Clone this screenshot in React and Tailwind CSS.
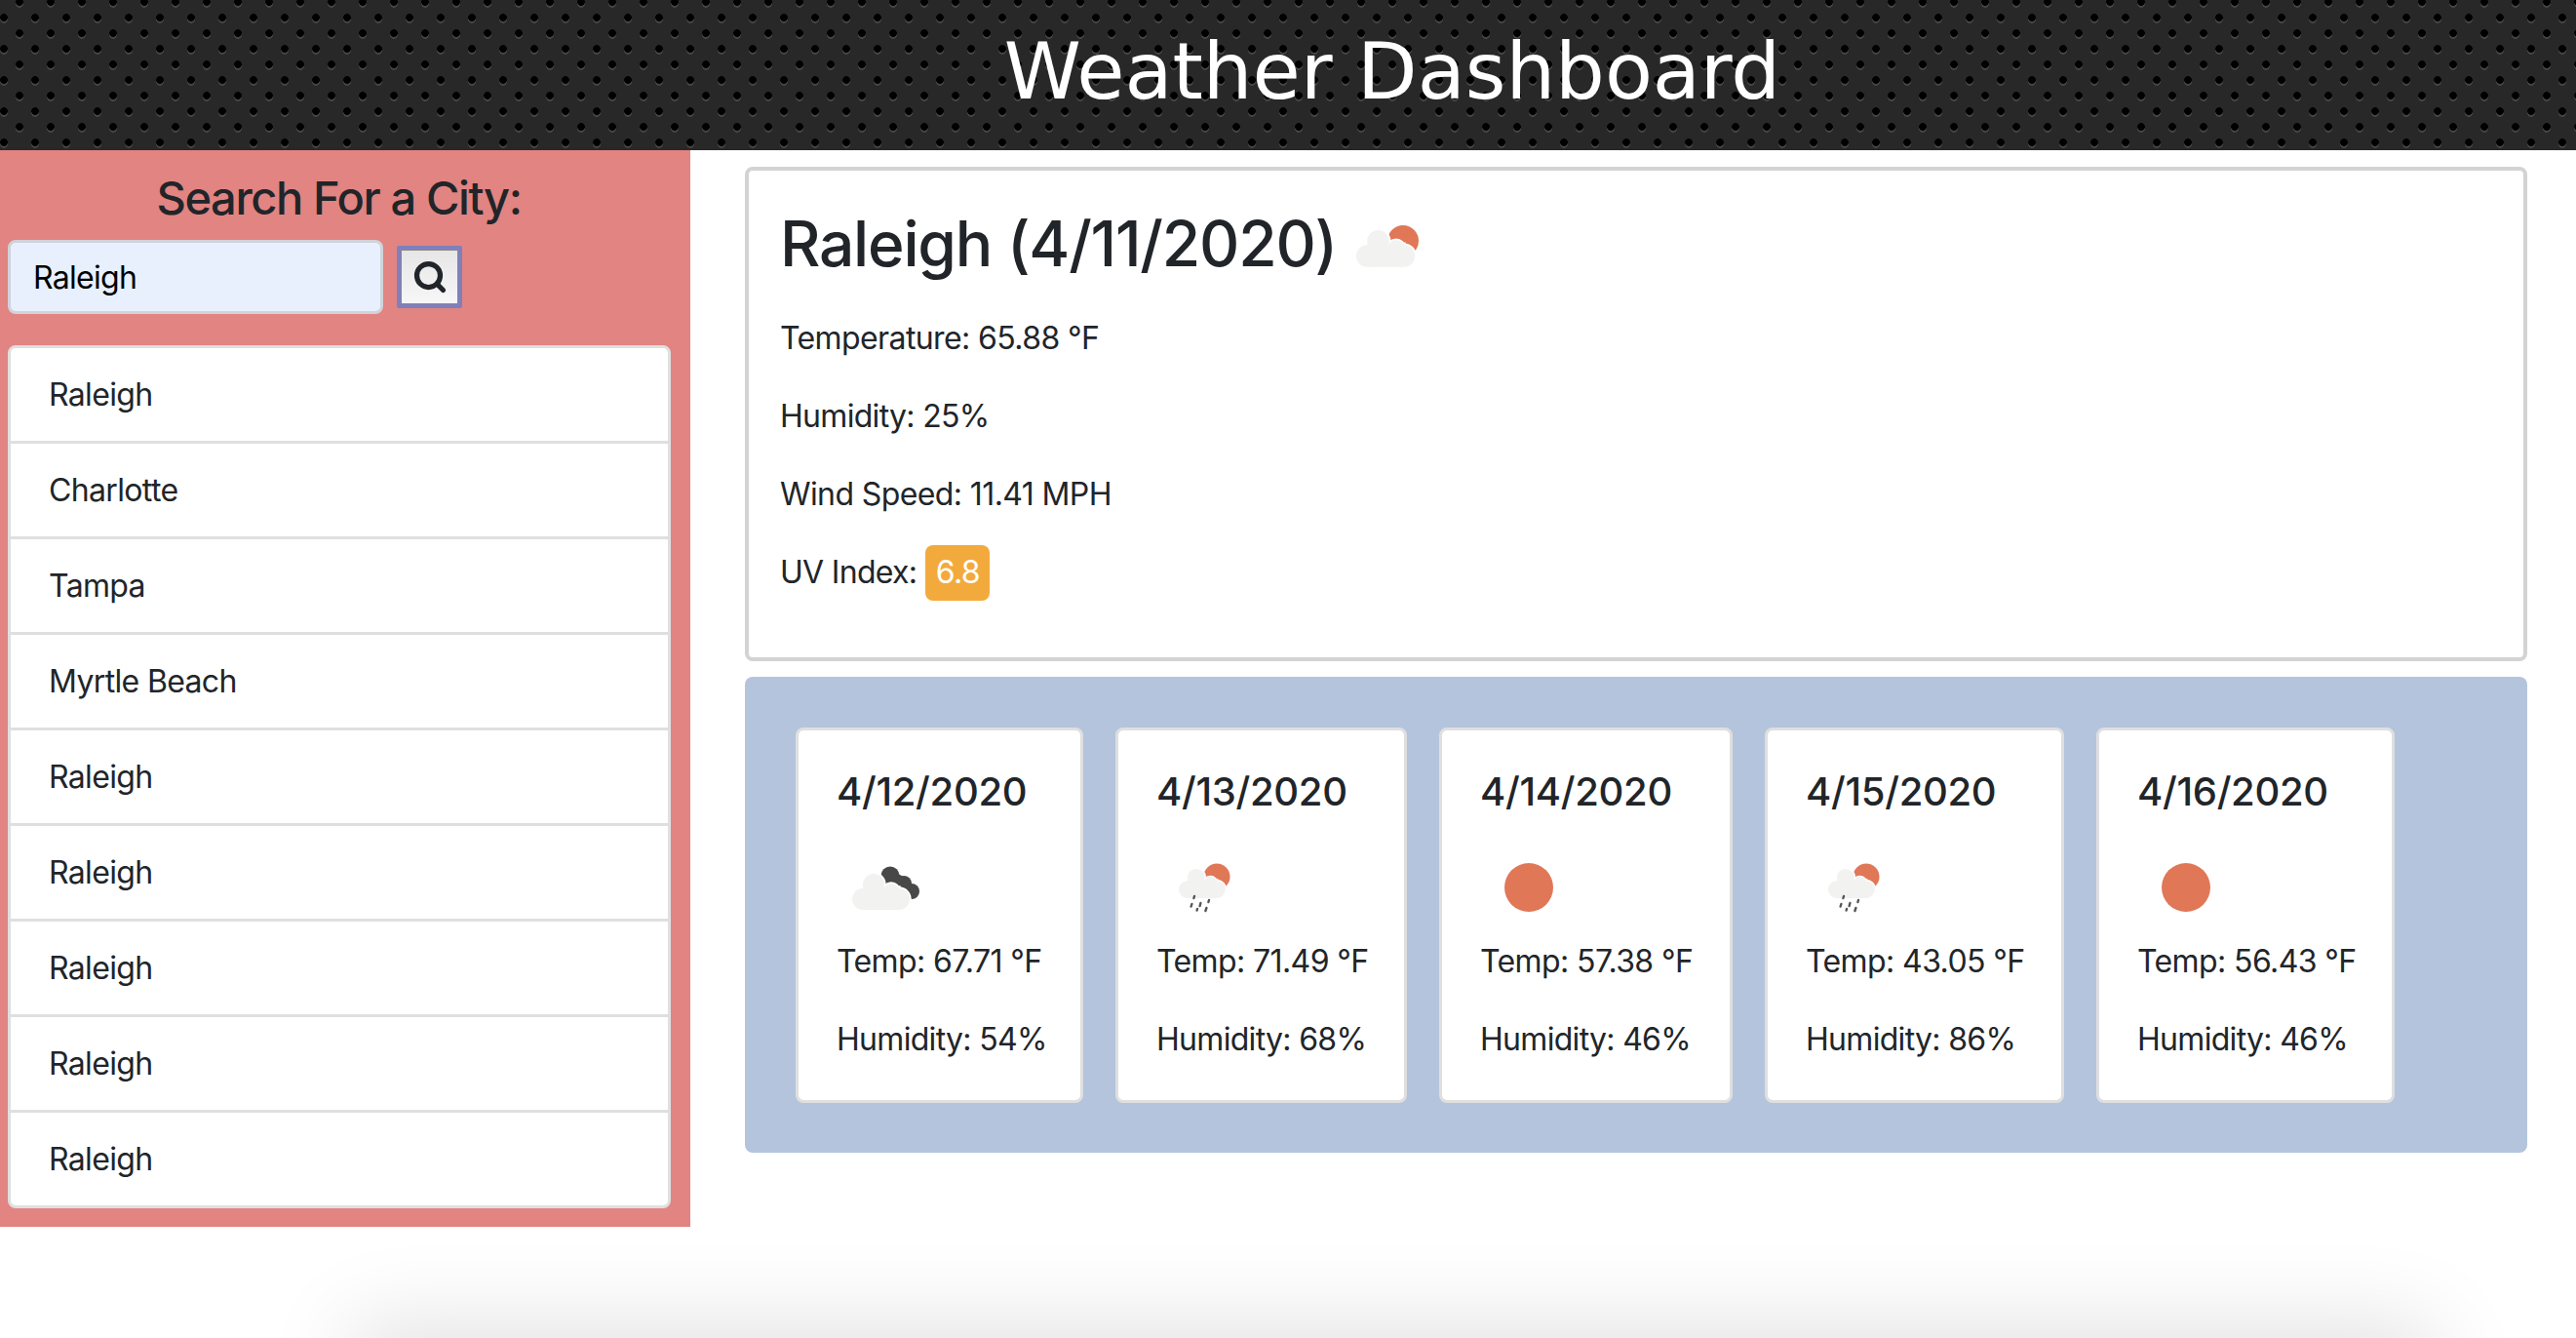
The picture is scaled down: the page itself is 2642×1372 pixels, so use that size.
import React from 'react';
import { Search } from 'lucide-react';

const history = ['Raleigh', 'Charlotte', 'Tampa', 'Myrtle Beach', 'Raleigh', 'Raleigh', 'Raleigh', 'Raleigh', 'Raleigh'];

const forecast = [
  { date: '4/12/2020', icon: 'clouds', temp: '67.71', hum: '54', width: 'w-[295px]' },
  { date: '4/13/2020', icon: 'rain', temp: '71.49', hum: '68', width: 'w-[299px]' },
  { date: '4/14/2020', icon: 'sun', temp: '57.38', hum: '46', width: 'w-[301px]' },
  { date: '4/15/2020', icon: 'rain', temp: '43.05', hum: '86', width: 'w-[307px]' },
  { date: '4/16/2020', icon: 'sun', temp: '56.43', hum: '46', width: 'w-[306px]' },
];

function Cloud({ x, y, scale }) {
  const shapes = (
    <>
      <circle cx="11" cy="26" r="11" />
      <circle cx="22" cy="11" r="11" />
      <circle cx="40" cy="18" r="8" />
      <circle cx="48" cy="26" r="11" />
      <rect x="11" y="14" width="37" height="23" />
    </>
  );
  return (
    <g transform={`translate(${x} ${y}) scale(${scale})`}>
      <g fill="#ffffff" stroke="#ffffff" strokeWidth="3.5">{shapes}</g>
      <g fill="#f2f2f0">{shapes}</g>
    </g>
  );
}

function WeatherIcon({ type }) {
  if (type === 'sun') {
    return (
      <svg width="100" height="84" viewBox="0 0 100 84">
        <circle cx="50" cy="41" r="25" fill="#e07757" />
      </svg>
    );
  }
  if (type === 'clouds') {
    return (
      <svg width="100" height="84" viewBox="0 0 100 84">
        <g fill="#484848">
          <circle cx="55" cy="29" r="9.5" />
          <circle cx="69" cy="37" r="8" />
          <circle cx="77" cy="45" r="8" />
          <polygon points="47,32 58,24 72,32 82,42 74,52 60,50" />
        </g>
        <Cloud x={16} y={27} scale={1} />
      </svg>
    );
  }
  return (
    <svg width="100" height="84" viewBox="0 0 100 84">
      <circle cx="62" cy="30" r="13.5" fill="#e07757" />
      <Cloud x={23} y={22} scale={0.81} />
      <g stroke="#555555" strokeWidth="2.4" strokeLinecap="round">
        <line x1="39" y1="50" x2="38.4" y2="52" />
        <line x1="36.4" y1="58" x2="35.6" y2="60.5" />
        <line x1="45.4" y1="57" x2="44.6" y2="60" />
        <line x1="54" y1="54" x2="53.4" y2="56" />
        <line x1="42" y1="63" x2="41.6" y2="64.5" />
        <line x1="51.4" y1="62" x2="50.4" y2="65" />
      </g>
    </svg>
  );
}

function HeadingIcon() {
  return (
    <svg width="70" height="48" viewBox="0 0 70 48">
      <circle cx="48" cy="21" r="16" fill="#e07757" />
      <Cloud x={0} y={10} scale={1.02} />
    </svg>
  );
}

export default function App() {
  return (
    <div className="relative h-[1372px] overflow-hidden bg-white font-['Inter',sans-serif] text-[#212529]">
      <header className="flex h-[154px] items-center justify-center bg-[#282828] [background-image:radial-gradient(circle_at_4px_26px,#000_3.5px,transparent_4.2px),radial-gradient(circle_at_20px_10px,#000_3.5px,transparent_4.2px),radial-gradient(circle_at_4px_28px,#454545_3.5px,transparent_4.2px),radial-gradient(circle_at_20px_12px,#454545_3.5px,transparent_4.2px)] bg-[size:32px_32px] bg-[position:0_-8px]">
        <h1 className="mb-[6px] ml-[214px] font-['DejaVu_Sans',sans-serif] text-[80px] leading-none font-normal text-white">
          Weather Dashboard
        </h1>
      </header>

      <div className="flex items-start">
        <aside className="h-[1104px] w-[708px] shrink-0 bg-[#e18482] pt-[22px] pl-[8px]">
          <h4 className="w-[679px] text-center text-[47px] leading-[54px] font-[550] tracking-[-1.4px]">
            Search For a City:
          </h4>
          <div className="mt-[16px] flex items-center gap-[14px]">
            <div className="flex h-[76px] w-[385px] items-center rounded-[8px] border-[3px] border-[#d0d3da] bg-[#e8f0fe] pt-[2px] pl-[23px] text-[32px] tracking-[-0.7px] text-black">
              Raleigh
            </div>
            <button className="flex h-[64px] w-[67px] items-center justify-center rounded-[2px] border-[4px] border-[#7f7fbd] bg-gradient-to-b from-[#e6e6e6] to-[#f7f7f7] outline outline-1 -outline-offset-[5px] outline-[#8a8a8a]">
              <Search size={36} strokeWidth={3.5} color="#212529" />
            </button>
          </div>
          <ul className="mt-[32px] w-[680px] overflow-hidden rounded-[8px] border-[3px] border-[#dfdfdf] bg-white">
            {history.map((city, i) => (
              <li
                key={i}
                className="flex h-[98px] items-center border-b-[3px] border-[#dfdfdf] pl-[39px] text-[32px] tracking-[-0.65px] last:h-[95px] last:border-b-0"
              >
                {city}
              </li>
            ))}
          </ul>
        </aside>

        <main className="ml-[56px] w-[1828px] pt-[17px]">
          <section className="h-[507px] rounded-[8px] border-[4px] border-[#d3d3d3] pt-[37px] pl-[32px]">
            <h2 className="flex h-[76px] items-center gap-[20px] text-[64px] leading-none font-[550] tracking-[-1.2px]">
              Raleigh (4/11/2020)
              <HeadingIcon />
            </h2>
            <p className="mt-[39px] h-[40px] text-[32px] leading-[40px] tracking-[-0.6px]">Temperature: 65.88 °F</p>
            <p className="mt-[40px] h-[40px] text-[32px] leading-[40px] tracking-[-0.7px]">Humidity: 25%</p>
            <p className="mt-[40px] h-[40px] text-[32px] leading-[40px] tracking-[-0.6px]">Wind Speed: 11.41 MPH</p>
            <p className="mt-[40px] flex h-[40px] items-center text-[32px] tracking-[-0.7px]">
              UV Index:
              <span className="ml-[9px] flex h-[57px] w-[66px] items-center justify-center rounded-[8px] bg-[#f3aa3c] text-white">
                6.8
              </span>
            </p>
          </section>

          <section className="mt-[16px] flex h-[488px] gap-[33px] rounded-[8px] bg-[#b4c4dd] pt-[52px] pl-[52px]">
            {forecast.map((day) => (
              <div
                key={day.date}
                className={`${day.width} h-[385px] rounded-[8px] border-[3px] border-[#dfdfdf] bg-white pl-[39px]`}
              >
                <h5 className="mt-[39px] h-[48px] text-[40px] leading-[48px] font-medium tracking-[-0.3px]">{day.date}</h5>
                <div className="mt-[33px]">
                  <WeatherIcon type={day.icon} />
                </div>
                <p className="mt-[13px] h-[40px] text-[32px] leading-[40px] tracking-[-0.6px]">Temp: {day.temp} °F</p>
                <p className="mt-[40px] h-[40px] text-[32px] leading-[40px] tracking-[-0.7px]">Humidity: {day.hum}%</p>
              </div>
            ))}
          </section>
        </main>
      </div>

      <div className="absolute top-[1392px] right-[180px] left-[395px] h-[100px] bg-[#e0e0e0] shadow-[0_0_90px_35px_#e2e2e2]" />
    </div>
  );
}
